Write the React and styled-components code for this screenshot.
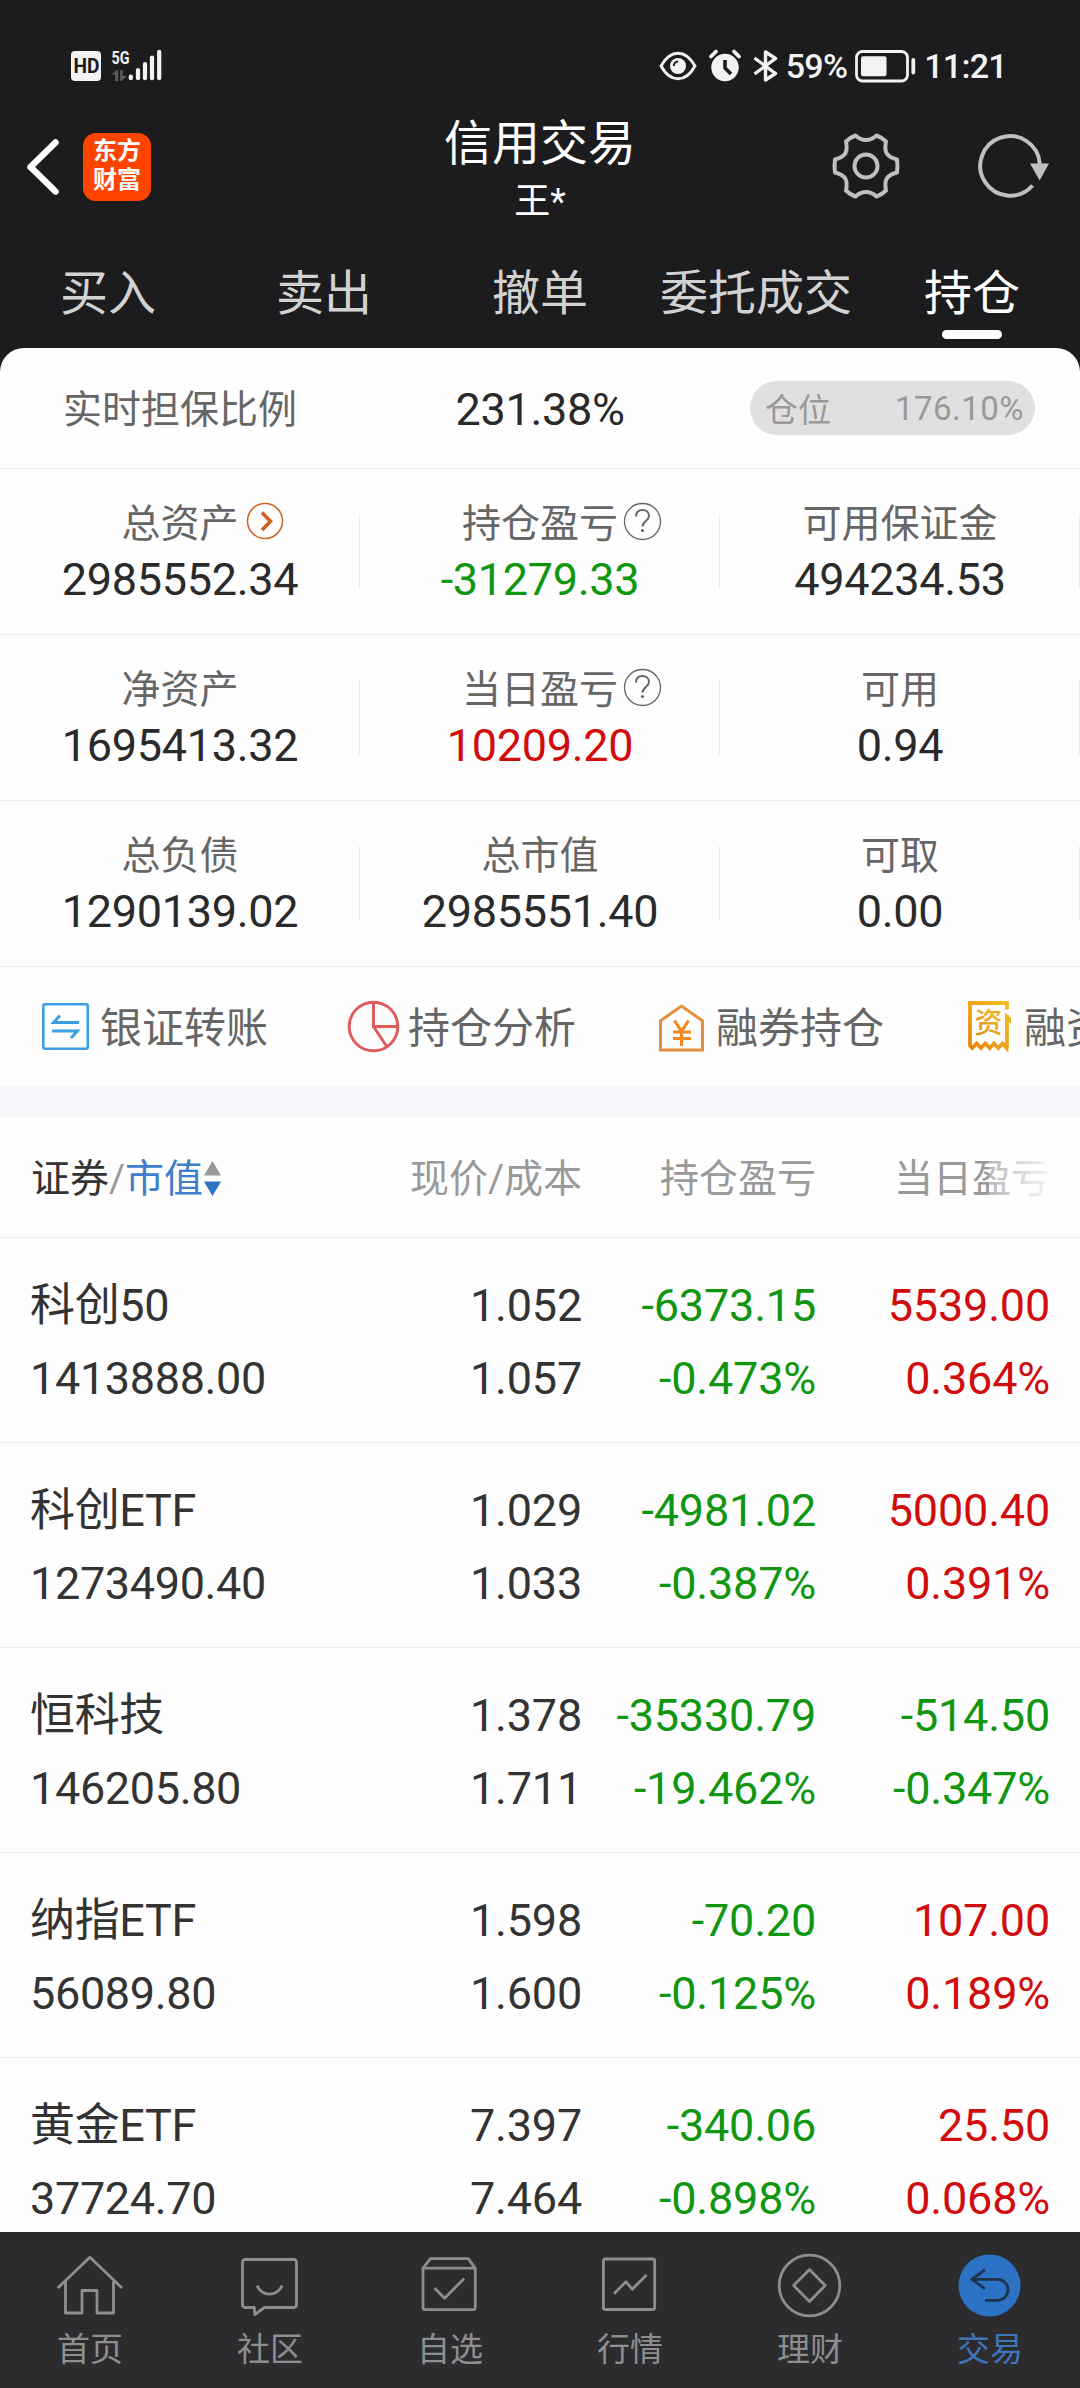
import React from "react";
import styled, { createGlobalStyle } from "styled-components";

const GlobalStyle = createGlobalStyle`
  * {
    box-sizing: border-box;
  }

  body {
    margin: 0;
    background: #1c1c1e;
    font-family: Roboto, "Noto Sans CJK SC", sans-serif;
  }
`;

const colors = {
  up: "#d00c0c",
  down: "#109610",
  text: "#2a2a2a",
};

const Screen = styled.div`
  width: 1080px;
  height: 2388px;
  display: flex;
  flex-direction: column;
  overflow: hidden;
  background: #1c1c1e;
`;

const StatusBar = styled.div`
  height: 96px;
  flex-shrink: 0;
  display: flex;
  align-items: center;
  justify-content: space-between;
  padding: 36px 73px 0 70px;
  color: #f2f2f2;
`;

const StatusGroup = styled.div`
  display: flex;
  align-items: center;
`;

const StatusText = styled.span`
  font-size: 34px;
  font-weight: 500;
  line-height: 60px;
  letter-spacing: -0.7px;
  margin-left: ${(props) => props.$left}px;
`;

const StatusIcon = styled.svg`
  display: block;
  overflow: visible;
  margin-left: ${(props) => props.$left || 0}px;
`;

const Header = styled.header`
  height: 144px;
  flex-shrink: 0;
  display: grid;
  grid-template-columns: 360px 360px 360px;
  align-items: center;
`;

const HeaderLeft = styled.div`
  display: flex;
  align-items: center;
  padding-left: 22px;
  gap: 21px;
  margin-top: -3px;
`;

const Logo = styled.div`
  width: 68px;
  height: 68px;
  border-radius: 13px;
  background: #ff4400;
  color: #fff;
  display: flex;
  flex-direction: column;
  align-items: center;
  justify-content: center;
  padding-bottom: 1px;
  font-size: 24px;
  font-weight: 700;
  line-height: 29px;
`;

const HeaderTitle = styled.div`
  padding-top: 4px;
  text-align: center;
  color: #fff;
`;

const Title = styled.h1`
  margin: 0;
  font-size: 48px;
  font-weight: 400;
  line-height: 64px;
`;

const SubTitle = styled.div`
  font-size: 36px;
  line-height: 52px;
`;

const HeaderRight = styled.div`
  display: flex;
  align-items: center;
  justify-content: flex-end;
  padding-right: 26px;
  gap: 72px;
  margin-top: -4px;
`;

const Tabs = styled.nav`
  height: 108px;
  flex-shrink: 0;
  display: grid;
  grid-template-columns: repeat(5, 1fr);
`;

const Tab = styled.div`
  display: flex;
  flex-direction: column;
  align-items: center;
  padding-top: 19px;
  font-size: 48px;
  line-height: 70px;
  color: ${(props) => (props.$active ? "#fff" : "#d2d2d2")};

  &::after {
    content: "";
    width: 60px;
    height: 9px;
    margin-top: 1px;
    border-radius: 5px;
    background: ${(props) => (props.$active ? "#fff" : "transparent")};
  }
`;

const Content = styled.main`
  flex: 1;
  min-height: 0;
  overflow: hidden;
  background: #fefefe;
  border-radius: 24px 24px 0 0;
`;

const RatioRow = styled.section`
  height: 121px;
  display: grid;
  grid-template-columns: repeat(3, 1fr);
  align-items: center;
  padding-top: 3px;
  border-bottom: 1px solid #ebebeb;
  text-align: center;
`;

const Label = styled.span`
  position: relative;
  font-size: 39px;
  line-height: 56px;
  color: #666;
`;

const Value = styled.span`
  font-size: 45px;
  line-height: 56px;
  letter-spacing: -0.3px;
  color: ${(props) => colors[props.$tone || "text"]};
`;

const Pill = styled.div`
  width: 285px;
  height: 54px;
  margin: -3px 0 0 30px;
  padding: 0 11px 0 15px;
  display: flex;
  align-items: center;
  justify-content: space-between;
  border-radius: 27px;
  background: #e0e0e0;
  color: #999;
  font-size: 33px;
`;

const PillValue = styled.span`
  letter-spacing: 0.5px;
`;

const SummaryRow = styled.section`
  height: 166px;
  display: grid;
  grid-template-columns: repeat(3, 1fr);
  align-items: center;
  border-bottom: 1px solid #ebebeb;
`;

const SummaryCell = styled.div`
  height: 165px;
  display: flex;
  flex-direction: column;
  align-items: center;
  padding-top: 27px;
  background: linear-gradient(#ebebeb, #ebebeb) right 45px / 1px 75px no-repeat;
`;

// Hangs off the label so the label itself stays centred
const LabelIcon = styled.svg`
  position: absolute;
  left: 100%;
  top: 5px;
  margin-left: ${(props) => props.$gap}px;
`;

const QuickLinks = styled.section`
  height: 120px;
  display: flex;
  align-items: center;
  gap: 78px;
  padding-left: 38px;
  overflow: hidden;
`;

const QuickLink = styled.div`
  flex: none;
  display: flex;
  align-items: center;
  gap: 8px;
  width: 230px;
  color: #666;
`;

const QuickLabel = styled.span`
  padding-top: 4px;
  font-size: 42px;
  line-height: 60px;
  white-space: nowrap;
`;

const Divider = styled.div`
  height: 30px;
  background: #f6f7fa;
`;

const TableHead = styled.div`
  position: relative;
  height: 121px;
  display: grid;
  grid-template-columns: 350px 232px 234px 234px;
  align-items: center;
  padding-top: 3px;
  border-bottom: 1px solid #ebebeb;
  font-size: 39px;
  line-height: 56px;
  color: #999;
  text-align: right;

  &::after {
    content: "";
    position: absolute;
    top: 0;
    right: 0;
    width: 91px;
    height: 119px;
    background: linear-gradient(
      to right,
      rgba(254, 254, 254, 0.3),
      rgba(254, 254, 254, 0.95) 70%
    );
  }
`;

const SortHead = styled.div`
  display: flex;
  align-items: center;
  padding-left: 31px;
`;

const Dark = styled.span`
  color: #333;
`;

const Blue = styled.span`
  color: #3f7dcc;
`;

const Holding = styled.div`
  height: 205px;
  display: grid;
  grid-template-columns: 350px 232px 234px 234px;
  grid-template-rows: 73px 73px;
  padding-top: 31px;
  border-bottom: 1px solid #ebebeb;
`;

const Cell = styled.div`
  font-size: 45px;
  line-height: 73px;
  letter-spacing: -0.2px;
  text-align: right;
  white-space: nowrap;
  color: ${(props) => colors[props.$tone] || "#333"};
`;

const NameCell = styled(Cell)`
  text-align: left;
  padding-left: 30px;
  letter-spacing: -0.35px;
`;

const BottomNav = styled.nav`
  height: 156px;
  flex-shrink: 0;
  display: grid;
  grid-template-columns: repeat(6, 1fr);
  background: #2c2c2e;
`;

const NavItem = styled.div`
  display: flex;
  flex-direction: column;
  align-items: center;
  padding-top: 21px;
  font-size: 33px;
  line-height: 48px;
  color: ${(props) => (props.$active ? "#3e74b8" : "#8e8e91")};

  svg {
    margin-bottom: 7px;
  }
`;

const SignalIcons = () => (
  <StatusIcon width="92" height="34" viewBox="0 0 92 34">
    <rect x="1" y="2" width="30" height="30" rx="4" fill="#f2f2f2" />
    <text
      x="3.500"
      y="24"
      fontSize="20"
      fontWeight="700"
      textLength="26"
      lengthAdjust="spacingAndGlyphs"
      fill="#1c1c1e"
    >
      HD
    </text>
    <text
      x="41.5"
      y="14.5"
      fontSize="19"
      fontWeight="700"
      textLength="18"
      lengthAdjust="spacingAndGlyphs"
      fill="#f2f2f2"
    >
      5G
    </text>
    <path d="M41.500 25.500l5.500-4.500h1.200v11h-3v-6.500zM50.200 21h2.500v6h4l-5 5h-1.500z" fill="#5b5b5d" />
    <g stroke="#f2f2f2" strokeWidth="4.2" strokeLinecap="round">
      <path d="M60.8 27.6v1.6M68 21.2v8M75 15v14.2M82 8.6v20.6M89.2 2.8v26.4" />
    </g>
  </StatusIcon>
);

const EyeIcon = () => (
  <StatusIcon width="38" height="32" viewBox="0 0 38 32">
    <path
      d="M2 16C7 7 12.500 3.200 19 3.200S31 7 36 16C31 25 25.500 28.800 19 28.800S7 25 2 16z"
      fill="none"
      stroke="#f2f2f2"
      strokeWidth="3"
      strokeLinejoin="round"
    />
    <circle cx="19" cy="16" r="8" fill="#f2f2f2" />
    <path d="M14.800 16a4.500 4.500 0 0 1 4.200-4.500" fill="none" stroke="#1c1c1e" strokeWidth="2" />
  </StatusIcon>
);

const AlarmIcon = () => (
  <StatusIcon $left={11} width="34" height="34" viewBox="0 0 34 34">
    <circle cx="17" cy="18.500" r="13.700" fill="#f2f2f2" />
    <path d="M3 7.500l5-5M31 7.500l-5-5" stroke="#f2f2f2" strokeWidth="3.800" strokeLinecap="round" />
    <path d="M17 11v8l6 6" fill="none" stroke="#1c1c1e" strokeWidth="3.600" />
  </StatusIcon>
);

const BluetoothIcon = () => (
  <StatusIcon $left={9} width="28" height="34" viewBox="0 0 28 34">
    <path
      d="M3.500 9L24.500 24.500 14.500 31V3L24.500 9.500 3.500 25"
      fill="none"
      stroke="#f2f2f2"
      strokeWidth="3.400"
      strokeLinejoin="round"
    />
  </StatusIcon>
);

const BatteryIcon = () => (
  <StatusIcon $left={8} width="62" height="34" viewBox="0 0 62 34">
    <rect x="1.500" y="2.500" width="51" height="29.500" rx="6" fill="none" stroke="#f2f2f2" strokeWidth="2.800" />
    <rect x="6" y="7.300" width="25.500" height="20" rx="2" fill="#f2f2f2" />
    <path d="M58.300 11v12.500" stroke="#f2f2f2" strokeWidth="3.800" strokeLinecap="round" />
  </StatusIcon>
);

const BackIcon = () => (
  <svg width="40" height="60" viewBox="0 0 40 60">
    <path
      d="M33.500 5.500L8.500 30l25 24.500"
      fill="none"
      stroke="#fff"
      strokeWidth="6.500"
      strokeLinecap="round"
      strokeLinejoin="round"
    />
  </svg>
);

const GearIcon = () => (
  <svg width="72" height="72" viewBox="-36 -36 72 72" fill="none" stroke="#bfbfc0" strokeWidth="4">
    <path
      strokeLinejoin="round"
      d="M-10.500-30.500C-4-24.500 4-24.500 10.500-30.500Q16-28.500 20-24.500C18-14 20-9.500 31-6.500Q32 0 31 6.500C20 9.500 18 14 20 24.500Q16 28.500 10.500 30.500C4 24.500-4 24.500-10.500 30.500Q-16 28.500-20 24.500C-18 14-20 9.500-31 6.500Q-32 0-31-6.500C-20-9.500-18-14-20-24.500Q-16-28.500-10.500-30.500z"
    />
    <circle r="11.500" />
  </svg>
);

const RefreshIcon = () => (
  <svg width="80" height="72" viewBox="-36 -36 80 72">
    <path d="M29.800-2A29.800 29.800 0 1 0 22.500 19.500" fill="none" stroke="#bfbfc0" strokeWidth="4" />
    <path d="M20-2.500h19L29.600 14.500z" fill="#bfbfc0" />
  </svg>
);

const ArrowCircle = () => (
  <LabelIcon $gap={4} width="42" height="42" viewBox="0 0 42 42" fill="none" stroke="#cf6326">
    <circle cx="22" cy="20" r="17.500" strokeWidth="1.500" />
    <path d="M19 11.500l8.500 8.700-8.500 8.800" strokeWidth="3.600" />
  </LabelIcon>
);

const HelpCircle = () => (
  <LabelIcon $gap={3} width="42" height="42" viewBox="0 0 42 42" fill="none" stroke="#666">
    <circle cx="21.500" cy="20.500" r="18" strokeWidth="1.300" />
    <path d="M15 15.500C15 11 18 9 21.500 9s6.500 2.200 6.500 6c0 4.500-6.500 5.500-6.500 10.500" strokeWidth="2" />
    <circle cx="21.500" cy="29.500" r="1.600" fill="#666" stroke="none" />
  </LabelIcon>
);

const TransferIcon = () => (
  <svg width="54" height="54" viewBox="0 0 54 54" fill="none" stroke="#3d9fe3">
    <rect x="5.300" y="4.300" width="44.500" height="44.500" rx="2" strokeWidth="2.600" />
    <path d="M41 22.500H15.500L22 15.500M14 31h25.500L33 38" strokeWidth="2.900" />
  </svg>
);

const PieIcon = () => (
  <svg width="54" height="54" viewBox="0 0 54 54" fill="none" stroke="#e05a5a" strokeWidth="2.900">
    <circle cx="27.500" cy="26.500" r="24.300" />
    <path d="M27.500 2v24.500H52M27.500 26.500L41 47" />
  </svg>
);

const HouseYenIcon = () => (
  <svg width="54" height="54" viewBox="0 0 54 54" fill="none" stroke="#e58e3c">
    <path d="M6.500 50V20.800L27.500 6l21 14.800V50z" strokeWidth="3" />
    <path d="M20.500 20.500l7 11 7-11M27.500 31v15M19 32h18M19 38.500h18" stroke="#f58a25" strokeWidth="3.200" />
  </svg>
);

const ReceiptIcon = () => (
  <svg width="54" height="54" viewBox="0 0 54 54">
    <defs>
      <linearGradient id="receipt" x1="0" y1="1" x2="1" y2="0">
        <stop offset="0" stopColor="#e88610" />
        <stop offset="1" stopColor="#f2be22" />
      </linearGradient>
    </defs>
    <path
      d="M45 9.500V3H8V45.500l2.300 2.500 4.400-4.500 4.300 4.500 4.300-4.500 4.400 4.500 4.300-4.500 4.300 4.500 4.400-4.500 4 4.500.300-2.500V15"
      fill="none"
      stroke="url(#receipt)"
      strokeWidth="3.800"
    />
    <path d="M43 12.500l6 5.500v6l-6-6z" fill="#efb41f" />
    <text x="26.500" y="33.500" fontSize="28" textAnchor="middle" fontWeight="500" fill="url(#receipt)">
      资
    </text>
  </svg>
);

const SortIcon = () => (
  <svg width="20" height="36" viewBox="0 0 20 36">
    <path d="M1 14.500h17L9.500 0z" fill="#999" />
    <path d="M1 20.500h17L9.500 35z" fill="#2d73c5" />
  </svg>
);

const NavIcon = ({ children }) => (
  <svg
    width="66"
    height="66"
    viewBox="0 0 66 66"
    fill="none"
    stroke="#8e8e91"
    strokeWidth="2.800"
    strokeLinejoin="round"
  >
    {children}
  </svg>
);

const summary = [
  [
    { label: "总资产", value: "2985552.34", icon: <ArrowCircle /> },
    { label: "持仓盈亏", value: "-31279.33", tone: "down", icon: <HelpCircle /> },
    { label: "可用保证金", value: "494234.53" },
  ],
  [
    { label: "净资产", value: "1695413.32" },
    { label: "当日盈亏", value: "10209.20", tone: "up", icon: <HelpCircle /> },
    { label: "可用", value: "0.94" },
  ],
  [
    { label: "总负债", value: "1290139.02" },
    { label: "总市值", value: "2985551.40" },
    { label: "可取", value: "0.00" },
  ],
];

const quickLinks = [
  { label: "银证转账", icon: <TransferIcon /> },
  { label: "持仓分析", icon: <PieIcon /> },
  { label: "融券持仓", icon: <HouseYenIcon /> },
  { label: "融资持仓", icon: <ReceiptIcon /> },
];

const holdings = [
  ["科创50", "1.052", "-6373.15", "5539.00", "1413888.00", "1.057", "-0.473%", "0.364%"],
  ["科创ETF", "1.029", "-4981.02", "5000.40", "1273490.40", "1.033", "-0.387%", "0.391%"],
  ["恒科技", "1.378", "-35330.79", "-514.50", "146205.80", "1.711", "-19.462%", "-0.347%"],
  ["纳指ETF", "1.598", "-70.20", "107.00", "56089.80", "1.600", "-0.125%", "0.189%"],
  ["黄金ETF", "7.397", "-340.06", "25.50", "37724.70", "7.464", "-0.898%", "0.068%"],
];

const toneOf = (value) => (value.startsWith("-") ? "down" : "up");

const navItems = [
  {
    label: "首页",
    icon: (
      <path d="M.800 35L32.900 4.200 65 35M8.500 28v32H25V37.500h15V60h16.500V28" />
    ),
  },
  {
    label: "社区",
    icon: (
      <>
        <path d="M8 6.500h49a2.500 2.500 0 0 1 2.500 2.500v43a2.500 2.500 0 0 1-2.500 2.500H27.500L17.800 61.500l-.500-7H8A2.500 2.500 0 0 1 5.500 52V9A2.500 2.500 0 0 1 8 6.500z" />
        <path d="M20 32.700C25.500 44 39.500 44 45.200 32.700" />
      </>
    ),
  },
  {
    label: "自选",
    icon: (
      <>
        <path d="M6 15.200L13.400 5.600h37.900l7 9.600v39a2.500 2.500 0 0 1-2.500 2.500H8.500A2.500 2.500 0 0 1 6 54.200zM6 15.200h52.300" />
        <path d="M17.500 35l10.100 10.200L47.200 25.500" />
      </>
    ),
  },
  {
    label: "行情",
    icon: (
      <>
        <rect x="6.400" y="6" width="51.300" height="50.500" rx="2" />
        <path d="M17 40.700l12-12 6.200 7.500L49.500 22" />
      </>
    ),
  },
  {
    label: "理财",
    icon: (
      <>
        <circle cx="32.500" cy="32.500" r="30.300" />
        <path d="M32.500 16.500l15.700 16-15.700 16-15.900-16z" />
      </>
    ),
  },
  {
    label: "交易",
    active: true,
    icon: (
      <>
        <circle cx="32.500" cy="32.500" r="31" fill="#2d73c5" stroke="none" />
        <path
          d="M28 16.700L15 26.300l13 9.500M15 26.300h25.500a10.500 10.500 0 0 1 0 21H28"
          stroke="#1d344f"
          strokeLinejoin="miter"
        />
      </>
    ),
  },
];

const App = () => {
  return (
    <Screen>
      <GlobalStyle />
      <StatusBar>
        <StatusGroup>
          <SignalIcons />
        </StatusGroup>
        <StatusGroup>
          <EyeIcon />
          <AlarmIcon />
          <BluetoothIcon />
          <StatusText $left={7}>59%</StatusText>
          <BatteryIcon />
          <StatusText $left={7}>11:21</StatusText>
        </StatusGroup>
      </StatusBar>

      <Header>
        <HeaderLeft>
          <BackIcon />
          <Logo>
            <span>东方</span>
            <span>财富</span>
          </Logo>
        </HeaderLeft>
        <HeaderTitle>
          <Title>信用交易</Title>
          <SubTitle>王*</SubTitle>
        </HeaderTitle>
        <HeaderRight>
          <GearIcon />
          <RefreshIcon />
        </HeaderRight>
      </Header>

      <Tabs>
        <Tab>买入</Tab>
        <Tab>卖出</Tab>
        <Tab>撤单</Tab>
        <Tab>委托成交</Tab>
        <Tab $active>持仓</Tab>
      </Tabs>

      <Content>
        <RatioRow>
          <Label>实时担保比例</Label>
          <Value>231.38%</Value>
          <Pill>
            <span>仓位</span>
            <PillValue>176.10%</PillValue>
          </Pill>
        </RatioRow>

        {summary.map((row, i) => (
          <SummaryRow key={i}>
            {row.map((item) => (
              <SummaryCell key={item.label}>
                <Label>
                  {item.label}
                  {item.icon}
                </Label>
                <Value $tone={item.tone}>{item.value}</Value>
              </SummaryCell>
            ))}
          </SummaryRow>
        ))}

        <QuickLinks>
          {quickLinks.map((link) => (
            <QuickLink key={link.label}>
              {link.icon}
              <QuickLabel>{link.label}</QuickLabel>
            </QuickLink>
          ))}
        </QuickLinks>

        <Divider />

        <TableHead>
          <SortHead>
            <Dark>证券</Dark>/<Blue>市值</Blue>
            <SortIcon />
          </SortHead>
          <span>现价/成本</span>
          <span>持仓盈亏</span>
          <span>当日盈亏</span>
        </TableHead>

        {holdings.map(([name, price, profit, today, amount, cost, profitPct, todayPct]) => (
          <Holding key={name}>
            <NameCell>{name}</NameCell>
            <Cell>{price}</Cell>
            <Cell $tone={toneOf(profit)}>{profit}</Cell>
            <Cell $tone={toneOf(today)}>{today}</Cell>
            <NameCell>{amount}</NameCell>
            <Cell>{cost}</Cell>
            <Cell $tone={toneOf(profitPct)}>{profitPct}</Cell>
            <Cell $tone={toneOf(todayPct)}>{todayPct}</Cell>
          </Holding>
        ))}
      </Content>

      <BottomNav>
        {navItems.map((item) => (
          <NavItem key={item.label} $active={item.active}>
            <NavIcon>{item.icon}</NavIcon>
            {item.label}
          </NavItem>
        ))}
      </BottomNav>
    </Screen>
  );
};

export default App;
